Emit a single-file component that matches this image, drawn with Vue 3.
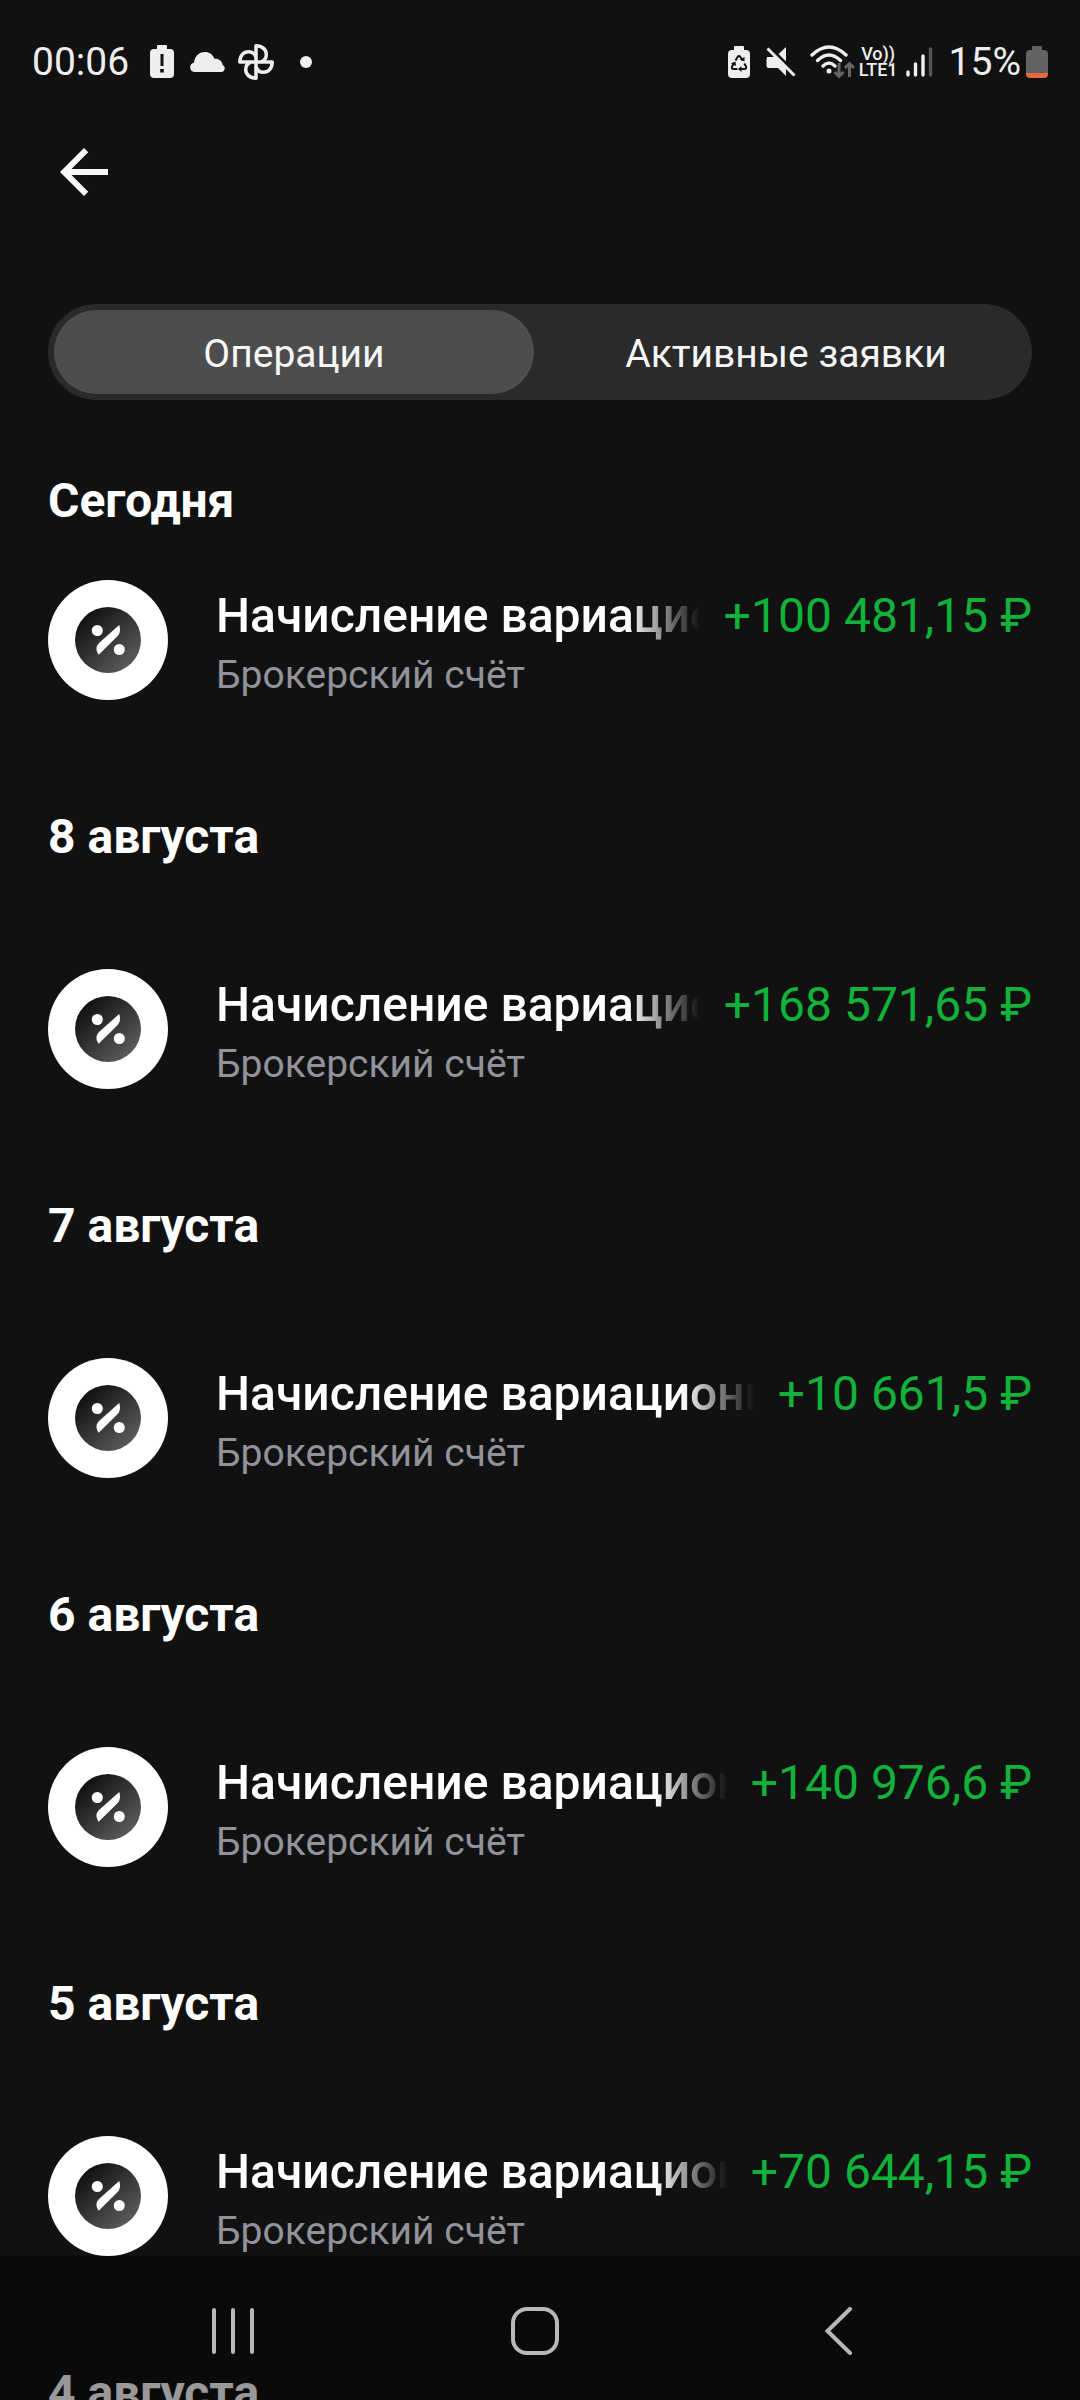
<template>
  <div class="screen">
    <div class="status-bar">
      <div class="status-side">
        <span class="clock">00:06</span>
        <svg class="icon-battery-alert" width="24" height="34" viewBox="0 0 24 34">
          <path
            fill="#eee"
            fill-rule="evenodd"
            d="M8 0h8a1 1 0 0 1 1 1v3h3a4 4 0 0 1 4 4v21a4 4 0 0 1-4 4H4a4 4 0 0 1-4-4V8a4 4 0 0 1 4-4h3V1a1 1 0 0 1 1-1zM10.500 9v12h3V9zM10.200 24v3.500h3.600v-3.500z"
          />
        </svg>
        <svg class="icon-cloud" width="36" height="20" viewBox="0 0 36 20">
          <path
            fill="#eee"
            d="M4.500 20a4.700 4.700 0 0 1-.5-9.300C4.500 4.500 9 0 14.800 0c4.500 0 8.200 2.700 9.700 6.800 4.200-.5 7.700 2.200 8.200 6.200A3.800 3.800 0 0 1 32 20z"
          />
        </svg>
        <svg class="icon-pinwheel" width="36" height="36" viewBox="0 0 36 36">
          <g fill="none" stroke="#eee" stroke-width="3.500" stroke-linejoin="round">
            <path d="M18 18V1.800c6.500 0 10.300 4 10.300 8.700 0 3.700-2 6.200-5.300 7.500" />
            <path d="M18 18h16.200c0 6.500-4 10.300-8.700 10.300-3.700 0-6.200-2-7.500-5.300" />
            <path d="M18 18v16.200c-6.500 0-10.300-4-10.300-8.700 0-3.700 2-6.200 5.300-7.500" />
            <path d="M18 18H1.800c0-6.500 4-10.300 8.700-10.300 3.700 0 6.200 2 7.500 5.300" />
          </g>
        </svg>
        <span class="dot"></span>
      </div>

      <div class="status-side">
        <svg class="icon-saver" width="22" height="32" viewBox="0 0 22 32">
          <path
            fill="#eee"
            d="M7 0h8a1 1 0 0 1 1 1v3h2a4 4 0 0 1 4 4v20a4 4 0 0 1-4 4H4a4 4 0 0 1-4-4V8a4 4 0 0 1 4-4h2V1a1 1 0 0 1 1-1z"
          />
          <g fill="none" stroke="#111" stroke-width="2">
            <path d="M7.500 14.500l2.200-3.700q1.300-1.600 2.600 0l2.200 3.700" />
            <path d="M16.300 17.500l1.700 3q.8 2.500-1.700 2.500H12.500" />
            <path d="M9.500 23H5.700Q3.200 23 4 20.500l2-3.500" />
          </g>
          <path fill="#111" d="M12 13.500l4.500 2V11zM13.500 20v6l-3.500-3zM3 17.500l4.500-2 .5 4.500z" />
        </svg>
        <svg class="icon-mute" width="30" height="30" viewBox="0 0 30 30">
          <path fill="#eee" d="M20 0v17L11.500 8zM1 10h8l11 11v8l-8-8H3a2.500 2.500 0 0 1-2.500-2.500v-6z" />
          <path stroke="#111" stroke-width="3" d="M4.500 1l26 26" />
          <path stroke="#eee" stroke-width="3" d="M1.500 1.500L28.500 28.500" />
        </svg>
        <svg class="icon-wifi" width="45" height="34" viewBox="0 0 45 34">
          <g fill="none" stroke="#eee" stroke-width="3.400" stroke-linecap="round">
            <path d="M2 10q17-16 34 0" />
            <path d="M7.500 15.500q11.500-11 23 0" />
            <path d="M13 21q6-6 12 0" />
          </g>
          <circle cx="19" cy="26" r="2.500" fill="#eee" />
          <path
            fill="none"
            stroke="#666"
            stroke-width="3"
            d="M29 18v13M24.500 27l4.500 4.500 4.500-4.500M39.500 32V19M35 23l4.500-4.500L44 23"
          />
        </svg>
        <span class="volte">
          <span class="volte-line">Vo))</span>
          <span class="volte-line">LTE1</span>
        </span>
        <svg class="icon-signal" width="27" height="30" viewBox="0 0 27 30">
          <g stroke-width="3.400" stroke-linecap="round" stroke="#eee">
            <path d="M2 25v3M9.500 17v11M17 9v19" />
            <path stroke="#555" d="M24.500 2v26" />
          </g>
        </svg>
        <span class="charge">15%</span>
        <svg class="icon-battery" width="22" height="32" viewBox="0 0 22 32">
          <path
            fill="#636363"
            d="M7 0h8a1 1 0 0 1 1 1v3h2a4 4 0 0 1 4 4v19H0V8a4 4 0 0 1 4-4h2V1a1 1 0 0 1 1-1z"
          />
          <path fill="#e8683f" d="M0 27h22v1a4 4 0 0 1-4 4H4a4 4 0 0 1-4-4z" />
        </svg>
      </div>
    </div>

    <header class="toolbar">
      <button class="back" type="button" aria-label="Назад">
        <svg width="72" height="72" viewBox="0 0 24 24">
          <path
            fill="#f6f7f8"
            d="M20 11H7.830l5.590-5.590L12 4l-8 8 8 8 1.410-1.410L7.830 13H20v-2z"
          />
        </svg>
      </button>
    </header>

    <div class="tabs" role="tablist">
      <button
        v-for="tab in tabs"
        :key="tab.id"
        :class="['tab', { active: tab.id === activeTab }]"
        type="button"
        role="tab"
        :aria-selected="tab.id === activeTab"
        @click="activeTab = tab.id"
      >
        {{ tab.label }}
      </button>
    </div>

    <main class="list">
      <section v-for="day in days" :key="day.date" class="day">
        <h2 class="day-title">{{ day.date }}</h2>
        <div v-for="amount in day.amounts" :key="amount" class="operation">
          <svg class="operation-icon" width="120" height="120" viewBox="0 0 120 120">
            <defs>
              <linearGradient id="coin" x1="0.1" y1="0.1" x2="0.85" y2="0.9">
                <stop offset="0" stop-color="#0c0c0c" />
                <stop offset="1" stop-color="#5c5c5c" />
              </linearGradient>
            </defs>
            <circle cx="60" cy="60" r="60" fill="#fff" />
            <circle cx="60" cy="60" r="33" fill="url(#coin)" />
            <g fill="#fff">
              <circle cx="49.300" cy="50.500" r="5.500" />
              <circle cx="71.300" cy="69.500" r="5.500" />
              <path d="M71.200 45c1.600 4.500 1 8.500-2.300 11.800L50.700 74.800c-3-4.300-3.200-8.300.6-12z" />
            </g>
          </svg>
          <div class="operation-body">
            <div class="operation-line">
              <span class="operation-name">Начисление вариационной</span>
              <span class="operation-amount">{{ amount }}</span>
            </div>
            <div class="operation-account">Брокерский счёт</div>
          </div>
        </div>
      </section>
    </main>

    <nav class="nav-bar">
      <button class="nav-button" type="button" aria-label="Недавние">
        <svg width="48" height="48" viewBox="0 0 48 48">
          <path stroke="#b8b8b8" stroke-width="4" stroke-linecap="round" d="M5 3v42M24 3v42M43 3v42" />
        </svg>
      </button>
      <button class="nav-button" type="button" aria-label="Главный экран">
        <svg width="48" height="48" viewBox="0 0 48 48">
          <rect x="2" y="2" width="44" height="44" rx="14" fill="none" stroke="#b8b8b8" stroke-width="4" />
        </svg>
      </button>
      <button class="nav-button" type="button" aria-label="Назад">
        <svg width="48" height="48" viewBox="0 0 48 48">
          <path
            fill="none"
            stroke="#b8b8b8"
            stroke-width="4"
            stroke-linecap="round"
            d="M37 2L14.500 24L37 46"
          />
        </svg>
      </button>
    </nav>
  </div>
</template>

<script setup>
import { ref } from 'vue'

const tabs = [
  { id: 'operations', label: 'Операции' },
  { id: 'orders', label: 'Активные заявки' },
]

const activeTab = ref('operations')

const days = [
  { date: 'Сегодня', amounts: ['+100 481,15\u00a0₽'] },
  { date: '8 августа', amounts: ['+168 571,65\u00a0₽'] },
  { date: '7 августа', amounts: ['+10 661,5\u00a0₽'] },
  { date: '6 августа', amounts: ['+140 976,6\u00a0₽'] },
  { date: '5 августа', amounts: ['+70 644,15\u00a0₽'] },
  { date: '4 августа', amounts: [] },
]
</script>

<style>
body {
  background: #111;
}
</style>

<style scoped>
.screen {
  position: relative;
  display: flex;
  flex-direction: column;
  height: 100vh;
  overflow: hidden;
  background: #111;
  color: #fff;
  font-family: Roboto, 'Noto Sans', sans-serif;
}

button {
  padding: 0;
  border: 0;
  background: none;
  color: inherit;
  font: inherit;
  cursor: pointer;
}

svg {
  display: block;
  flex-shrink: 0;
}

.status-bar {
  display: flex;
  flex-shrink: 0;
  align-items: center;
  justify-content: space-between;
  height: 124px;
  padding: 0 32px;
  color: #eee;
  font-size: 39px;
  line-height: 46px;
}

.status-side {
  display: flex;
  align-items: center;
}

.icon-battery-alert {
  margin-left: 21px;
}

.icon-cloud {
  margin-left: 16px;
}

.icon-pinwheel {
  margin-left: 12px;
}

.dot {
  width: 12px;
  height: 12px;
  margin-left: 26px;
  border-radius: 50%;
  background: #eee;
}

.icon-mute {
  margin-left: 16px;
}

.icon-wifi {
  margin-left: 14px;
}

.volte {
  display: flex;
  flex-direction: column;
  align-items: center;
  margin-left: 4px;
  font-size: 18px;
  font-weight: 500;
  line-height: 16px;
}

.icon-signal {
  margin-left: 8px;
}

.charge {
  margin-left: 16px;
}

.icon-battery {
  margin-left: 5px;
}

.toolbar {
  display: flex;
  flex-shrink: 0;
  align-items: center;
  height: 96px;
  padding: 0 48px;
}

.tabs {
  display: grid;
  flex-shrink: 0;
  grid-template-columns: 1fr 1fr;
  gap: 12px;
  margin: 84px 48px 0;
  padding: 6px;
  border-radius: 48px;
  background: #2a2a2a;
}

.tab {
  height: 84px;
  padding-top: 3px;
  border-radius: 42px;
  color: #f6f7f8;
  font-size: 39px;
  line-height: 46px;
}

.tab.active {
  background: #4d4d4d;
}

.list {
  flex: 1;
  min-height: 0;
  padding: 73px 48px 0;
  overflow: hidden;
}

.day + .day {
  margin-top: 109px;
}

.day-title {
  margin: 0 0 104px;
  font-size: 48px;
  font-weight: 700;
  line-height: 56px;
}

.day:first-child .day-title {
  margin-bottom: 51px;
}

.operation {
  display: flex;
  gap: 48px;
  height: 120px;
}

.operation-body {
  flex: 1;
  min-width: 0;
  padding-top: 8px;
}

.operation-line {
  display: flex;
  gap: 24px;
  font-size: 48px;
  line-height: 56px;
  white-space: nowrap;
}

/* long names fade out before the amount */
.operation-name {
  flex: 1;
  min-width: 0;
  overflow: hidden;
  font-weight: 500;
  mask-image: linear-gradient(to left, transparent, #000 72px);
}

.operation-amount {
  color: #12b23a;
}

.operation-account {
  margin-top: 8px;
  color: #92929b;
  font-size: 39px;
  line-height: 46px;
}

.nav-bar {
  position: absolute;
  right: 0;
  bottom: 0;
  left: 0;
  display: grid;
  grid-template-columns: repeat(3, 1fr);
  height: 144px;
  padding: 6px 92px 0 82px;
  box-sizing: border-box;
  background: rgba(0, 0, 0, 0.4);
}

.nav-button {
  display: flex;
  align-items: center;
  justify-content: center;
}
</style>
